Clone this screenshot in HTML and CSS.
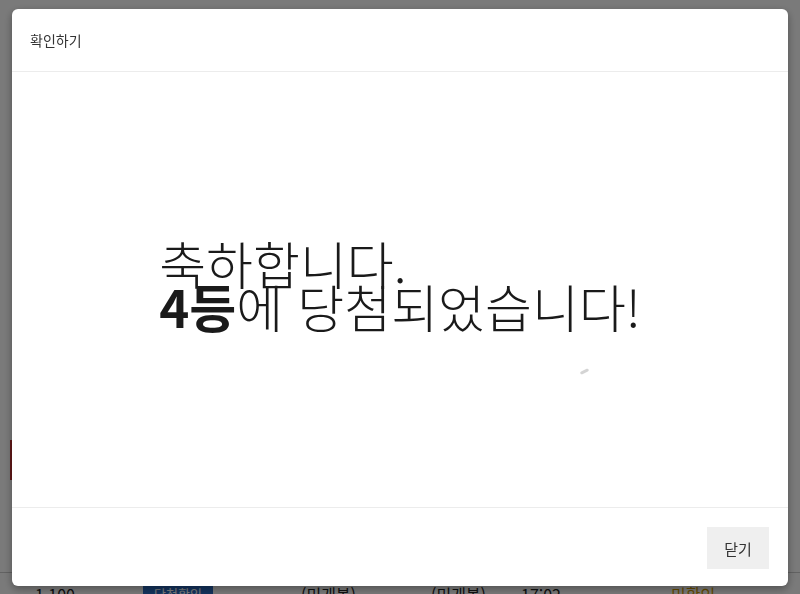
FILE: index.html
```html
<!DOCTYPE html>
<html lang="ko">

<head>
    <meta charset="UTF-8">
    <meta name="viewport" content="width=device-width, initial-scale=1.0">
    <title>확인하기</title>
    <link rel="stylesheet" href="styles.css">
</head>

<body>

    <!-- page behind the dialog -->
    <div class="page">
        <div class="side-mark"></div>
        <div class="row">
            <span class="cell num">1,100</span>
            <span class="cell badge">당첨확인</span>
            <span class="cell prize">(미개봉)</span>
            <span class="cell state">(미개봉)</span>
            <span class="cell time">17:02</span>
            <span class="cell gold">미확인</span>
        </div>
    </div>

    <div class="backdrop"></div>

    <div class="modal">
        <div class="modal-header">
            <h5 class="modal-title">확인하기</h5>
        </div>
        <div class="modal-body">
            <p class="result">축하합니다.<br><b>4등</b>에 당첨되었습니다!</p>
            <span class="cursor"></span>
        </div>
        <div class="modal-footer">
            <button type="button" class="btn-close">닫기</button>
        </div>
    </div>

</body>

</html>
```
FILE: styles.css
```css
* {
    box-sizing: border-box;
}

body {
    margin: 0;
    width: 800px;
    height: 594px;
    overflow: hidden;
    font-family: "Noto Sans CJK KR", "Noto Sans", sans-serif;
    color: #222;
    background: #fff;
}

.page {
    height: 594px;
    display: flex;
    flex-direction: column;
    justify-content: flex-end;
}

.side-mark {
    width: 3px;
    height: 40px;
    margin: 0 0 92px 10px;
    background: #c33;
}

.row {
    display: flex;
    height: 22px;
    padding: 6px 0 0 35px;
    font-size: 16px;
    line-height: 30px;
    border-top: 1px solid #ccc;
}

.cell {
    color: #222;
}

.num {
    width: 108px;
}

.badge {
    width: 70px;
    margin-right: 88px;
    background: #2b6cc4;
    color: #fff;
    font-size: 13px;
    text-align: center;
}

.prize {
    width: 130px;
}

.state {
    width: 90px;
}

.time {
    width: 150px;
}

.gold {
    color: #d49a00;
}

.backdrop {
    position: fixed;
    inset: 0;
    background: rgba(0, 0, 0, 0.52);
}

.modal {
    position: fixed;
    top: 9px;
    left: 12px;
    width: 776px;
    height: 577px;
    display: flex;
    flex-direction: column;
    background: #fff;
    border-radius: 6px;
    box-shadow: 0 3px 8px rgba(0, 0, 0, 0.35);
}

.modal-header {
    height: 63px;
    padding: 0 18px;
    display: flex;
    align-items: center;
    border-bottom: 1px solid #ececec;
}

.modal-title {
    margin: 0;
    font-size: 14px;
    font-weight: 400;
    color: #333;
}

.modal-body {
    flex: 1;
    display: flex;
    align-items: center;
    justify-content: center;
    position: relative;
}

.result {
    margin: 0 0 10px;
    font-size: 51px;
    line-height: 43px;
    font-weight: 300;
    color: #1a1a1a;
}

.result b {
    font-weight: 700;
}

.cursor {
    position: absolute;
    left: 568px;
    top: 298px;
    width: 9px;
    height: 3px;
    background: #d4d4d4;
    border-radius: 3px;
    transform: rotate(-25deg);
}

.modal-footer {
    height: 79px;
    padding: 19px;
    display: flex;
    justify-content: flex-end;
    align-items: flex-start;
    border-top: 1px solid #ececec;
}

.btn-close {
    width: 62px;
    height: 42px;
    border: 0;
    background: #efefef;
    font-family: "Noto Sans CJK KR", sans-serif;
    font-size: 15px;
    color: #333;
}
```
